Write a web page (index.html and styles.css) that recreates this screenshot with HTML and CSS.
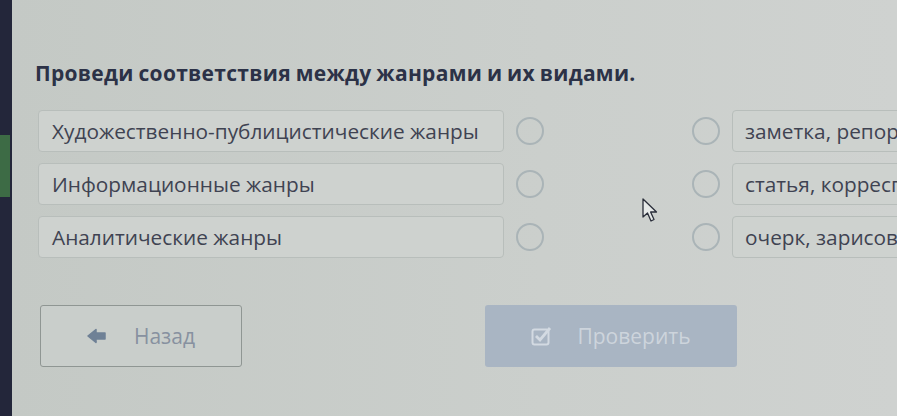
FILE: index.html
```html
<!DOCTYPE html>
<html lang="ru">
<head>
  <meta charset="UTF-8">
  <title>Соответствия</title>
  <link rel="stylesheet" href="styles.css">
</head>
<body>
  <div class="screen">
    <div class="side"><div class="side-mark"></div></div>
    <main class="main">
      <h2 class="title">Проведи соответствия между жанрами и их видами.</h2>

      <div class="match">
        <div class="item left">Художественно-публицистические жанры</div>
        <span class="dot"></span>
        <span></span>
        <span class="dot"></span>
        <div class="item right">заметка, репортаж, интервью</div>

        <div class="item left">Информационные жанры</div>
        <span class="dot"></span>
        <span></span>
        <span class="dot"></span>
        <div class="item right">статья, корреспонденция, рецензия</div>

        <div class="item left">Аналитические жанры</div>
        <span class="dot"></span>
        <span></span>
        <span class="dot"></span>
        <div class="item right">очерк, зарисовка, фельетон</div>
      </div>

      <div class="buttons">
        <button class="btn back">
          <svg width="20" height="16" viewBox="0 0 20 16"><path d="M1 8 L9 1.5 L9 5 L18 5 L18 11 L9 11 L9 14.5 Z" fill="#6f8196" stroke="#6f8196" stroke-linejoin="round" stroke-width="1.5"/></svg>
          <span>Назад</span>
        </button>
        <button class="btn check">
          <svg width="22" height="20" viewBox="0 0 22 20"><rect x="1.5" y="3.5" width="16" height="15" rx="2" fill="none" stroke="#d3dae2" stroke-width="2"/><path d="M5 10 L9 14 L19 2" fill="none" stroke="#d3dae2" stroke-width="2.8"/></svg>
          <span>Проверить</span>
        </button>
      </div>
    </main>
  </div>

  <svg class="cursor" width="18" height="26" viewBox="0 0 18 26">
    <path d="M1 1 L1 19 L5.5 15 L9 23 L12 21.5 L8.6 14 L14.5 14 Z" fill="#e6e9e8" stroke="#2a2e3a" stroke-width="1.3" stroke-linejoin="round"/>
  </svg>
</body>
</html>
```

FILE: styles.css
```css
body {
  margin: 0;
  font-family: "Open Sans", "Liberation Sans", sans-serif;
  background-color: #c9cecb;
  overflow: hidden;
}
.screen {
  display: flex;
  height: 416px;
}
.side {
  width: 12px;
  flex: none;
  background-color: #23263a;
  padding-top: 135px;
}
.side-mark {
  height: 62px;
  width: 10px;
  background-color: #3d6b45;
}
.main {
  flex: 1;
  padding: 60px 0 0 23px;
  background: linear-gradient(90deg, #c4c9c5 0%, #cbcfcc 60%, #cfd2d0 100%);
  overflow: hidden;
}
.title {
  margin: 0 0 24px 0;
  font-size: 21px;
  font-weight: 700;
  color: #2c3247;
  letter-spacing: 0.3px;
  word-spacing: -1px;
  line-height: 26px;
  white-space: nowrap;
}
.match {
  display: grid;
  grid-template-columns: 466px 28px 124px 28px 400px;
  grid-auto-rows: 42px;
  column-gap: 12px;
  row-gap: 11px;
  margin-left: 3px;
  align-items: center;
}
.item {
  height: 42px;
  box-sizing: border-box;
  border: 1px solid #b8bebb;
  border-radius: 4px;
  background-color: #ced2cf;
  color: #3f4352;
  font-size: 20.8px;
  line-height: 40px;
  padding-left: 13px;
  white-space: nowrap;
  overflow: hidden;
}
.item.right {
  padding-left: 12px;
}
.dot {
  width: 28px;
  height: 28px;
  box-sizing: border-box;
  border: 2px solid #aab4b7;
  border-radius: 50%;
}
.buttons {
  display: flex;
  margin-top: 47px;
  margin-left: 5px;
}
.btn {
  height: 62px;
  border-radius: 3px;
  font-family: "Open Sans", "Liberation Sans", sans-serif;
  font-size: 21px;
  display: flex;
  align-items: center;
  justify-content: center;
  gap: 24px;
  padding: 0;
}
.back {
  width: 202px;
  border: 1px solid #8f9693;
  background-color: #c9cecb;
  color: #8791a0;
  gap: 27px;
}
.check {
  width: 252px;
  margin-left: 243px;
  border: none;
  background-color: #a9b5c3;
  color: #cdd4dc;
  gap: 24px;
}
.cursor {
  position: absolute;
  left: 642px;
  top: 198px;
}
```
